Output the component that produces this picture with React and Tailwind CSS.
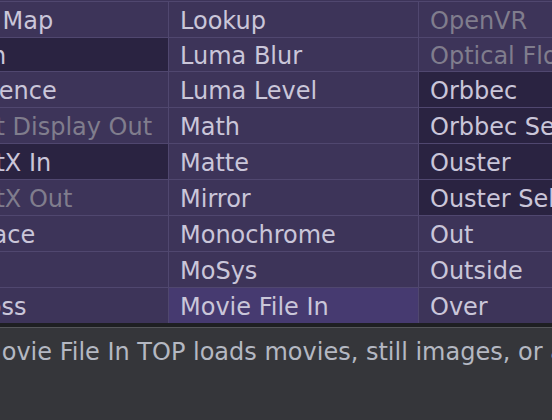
const rows = [
  { h: "h-[35px]", cells: [["Cube Map", "n"], ["Lookup", "n"], ["OpenVR", "off"]] },
  { h: "h-[33px]", cells: [["Depth", "dark"], ["Luma Blur", "n"], ["Optical Flow", "off"]] },
  { h: "h-[35px]", cells: [["Difference", "n"], ["Luma Level", "n"], ["Orbbec", "dark"]] },
  { h: "h-[35px]", cells: [["Direct Display Out", "off"], ["Math", "n"], ["Orbbec Select", "dark"]] },
  { h: "h-[35px]", cells: [["DirectX In", "dark"], ["Matte", "n"], ["Ouster", "dark"]] },
  { h: "h-[35px]", cells: [["DirectX Out", "off"], ["Mirror", "n"], ["Ouster Select", "dark"]] },
  { h: "h-[35px]", cells: [["Displace", "n"], ["Monochrome", "n"], ["Out", "n"]] },
  { h: "h-[35px]", cells: [["Edge", "n"], ["MoSys", "n"], ["Outside", "n"]] },
  { h: "h-[35px]", cells: [["Emboss", "n"], ["Movie File In", "hi"], ["Over", "n"]] },
]

const cellStyle = {
  n: "bg-[#3d3459] text-[#cac6d9]",
  off: "bg-[#3d3459] text-[#807d8d]",
  dark: "bg-[#2a2341] text-[#cac6d9]",
  hi: "bg-[#463a70] text-[#cac6d9]",
}

function Cell({ label, kind, width }) {
  return (
    <div className={`${width} shrink-0 flex items-center pl-[11px] pt-[3px] whitespace-nowrap overflow-hidden ${cellStyle[kind]}`}>
      {label}
    </div>
  )
}

export default function App() {
  return (
    <div
      className="w-[552px] h-[420px] overflow-hidden bg-[#35363a] flex flex-col"
      style={{ fontFamily: '"DejaVu Sans", Verdana, sans-serif' }}
    >
      <div className="flex flex-col gap-px bg-[#50476f] ml-[-78px] text-[24px] leading-none">
        <div className="h-px bg-[#3d3459]" />
        {rows.map((r, i) => (
          <div key={i} className={`flex gap-px ${r.h}`}>
            <Cell label={r.cells[0][0]} kind={r.cells[0][1]} width="w-[246px]" />
            <Cell label={r.cells[1][0]} kind={r.cells[1][1]} width="w-[249px]" />
            <Cell label={r.cells[2][0]} kind={r.cells[2][1]} width="w-[249px]" />
          </div>
        ))}
      </div>
      <div className="h-[4px] bg-[#1e1f22] shrink-0" />
      <div className="h-px bg-[#55565a] shrink-0" />
      <div className="ml-[-19px] pt-[6px] text-[24px] text-[#b4b8c2] whitespace-nowrap">
        Movie File In TOP loads movies, still images, or a sequence of still images into TOPs.
      </div>
    </div>
  )
}
